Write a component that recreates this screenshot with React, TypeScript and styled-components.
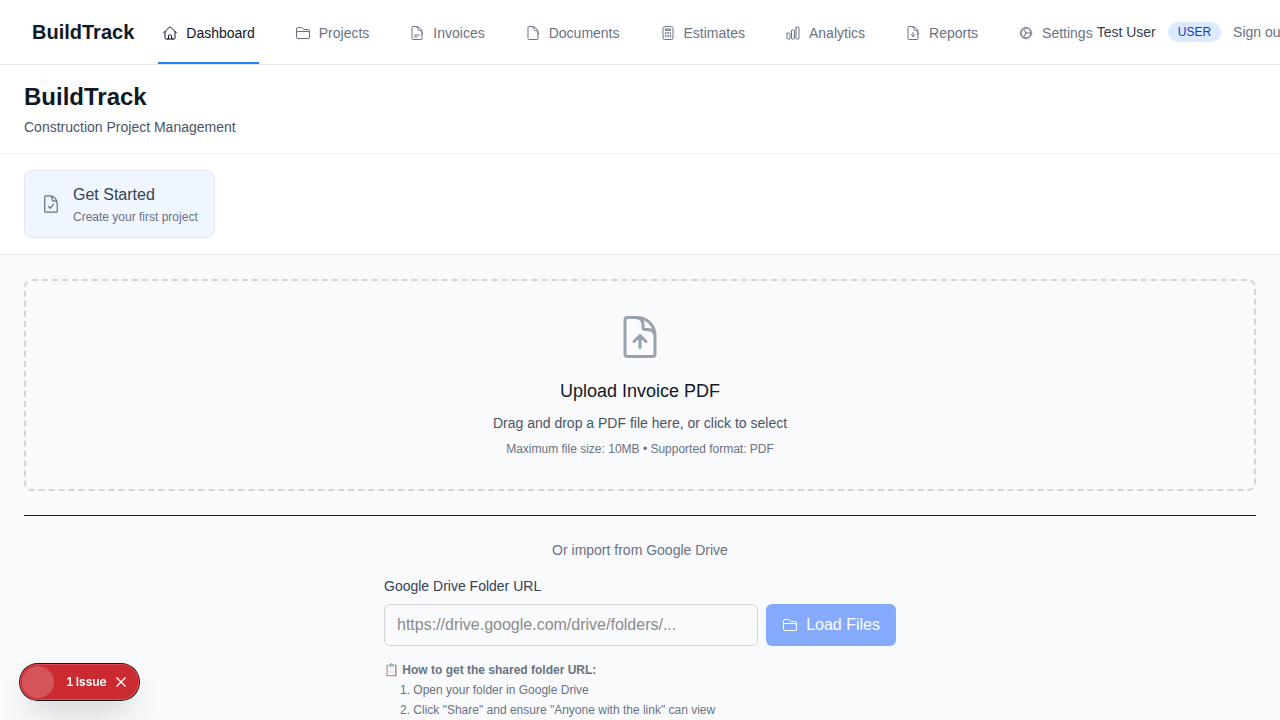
import React from "react";
import styled, { createGlobalStyle } from "styled-components";
import {
  HiOutlineHome,
  HiOutlineFolder,
  HiOutlineDocumentText,
  HiOutlineDocument,
  HiOutlineCalculator,
  HiOutlineChartBar,
  HiOutlineDocumentArrowDown,
  HiOutlineDocumentArrowUp,
  HiOutlineDocumentCheck,
  HiOutlineCog,
} from "react-icons/hi2";
import type { IconType } from "react-icons";

const GlobalStyle = createGlobalStyle`
  *, *::before, *::after { box-sizing: border-box; }
  body {
    margin: 0;
    background: #f9fafb;
    color: #171717;
    font-family: "Liberation Sans", Arial, Helvetica, sans-serif;
    font-size: 16px;
    line-height: 24px;
  }
  h1, h2, p, ol { margin: 0; padding: 0; }
  button, input { font: inherit; }
  svg { display: block; flex-shrink: 0; }
`;

const Page = styled.div`
  min-height: 100vh;
  overflow-x: hidden;
`;

const TopBar = styled.header`
  display: flex;
  justify-content: space-between;
  height: 65px;
  padding: 0 32px;
  background: #ffffff;
  border-bottom: 1px solid #e5e7eb;
  white-space: nowrap;
`;

const TopBarGroup = styled.div<{ $gap: number }>`
  display: flex;
  flex-shrink: 0;
  align-items: center;
  gap: ${(p) => p.$gap}px;
`;

const Brand = styled.a`
  color: #101828;
  font-size: 20px;
  font-weight: 700;
  line-height: 28px;
  text-decoration: none;
`;

const NavList = styled.nav`
  display: flex;
  align-self: stretch;
  gap: 32px;
`;

const NavLink = styled.a<{ $active: boolean }>`
  display: inline-flex;
  align-items: center;
  gap: 8px;
  padding: 4px 4px 0;
  border-bottom: 2px solid ${(p) => (p.$active ? "#2b7fff" : "transparent")};
  color: ${(p) => (p.$active ? "#101828" : "#6a7282")};
  font-size: 14px;
  line-height: 20px;
  text-decoration: none;
`;

const UserName = styled.span`
  color: #364153;
  font-size: 14px;
  line-height: 20px;
`;

const RoleBadge = styled.span`
  padding: 2px 10px;
  border-radius: 10px;
  background: #dbeafe;
  color: #193cb8;
  font-size: 12px;
  line-height: 16px;
`;

const SignOut = styled.button`
  padding: 0;
  border: 0;
  background: none;
  color: #6a7282;
  font-size: 14px;
  line-height: 20px;
  cursor: pointer;
`;

const PageHeader = styled.section`
  padding: 16px 24px;
  background: #ffffff;
  border-bottom: 1px solid #f3f4f6;
`;

const PageTitle = styled.h1`
  color: #101828;
  font-size: 24px;
  line-height: 32px;
`;

const PageSubtitle = styled.p`
  margin-top: 4px;
  color: #4a5565;
  font-size: 14px;
  line-height: 20px;
`;

const Steps = styled.section`
  display: flex;
  padding: 16px 24px;
  background: #ffffff;
  border-bottom: 1px solid #e5e7eb;
`;

const StepCard = styled.button`
  display: flex;
  align-items: center;
  gap: 12px;
  padding: 12px 16px;
  border: 1px solid #e5e7eb;
  border-radius: 8px;
  background: #eff6ff;
  color: #6a7282;
  text-align: left;
  cursor: pointer;
`;

const StepTitle = styled.span`
  display: block;
  color: #364153;
  line-height: 24px;
`;

const StepText = styled.span`
  display: block;
  margin-top: 2px;
  font-size: 12px;
  line-height: 16px;
`;

const Main = styled.main`
  padding: 24px;
`;

const DropZone = styled.section`
  display: flex;
  flex-direction: column;
  align-items: center;
  gap: 8px;
  padding: 32px;
  border: 2px dashed #d1d5dc;
  border-radius: 8px;
  color: #99a1af;
  text-align: center;
  cursor: pointer;
`;

const DropTitle = styled.h2`
  margin-top: 8px;
  color: #101828;
  font-size: 18px;
  font-weight: 400;
  line-height: 28px;
`;

const DropText = styled.p`
  color: #4a5565;
  font-size: 14px;
  line-height: 20px;
`;

const DropHint = styled.p`
  color: #6a7282;
  font-size: 12px;
  line-height: 16px;
`;

const ImportSection = styled.section`
  margin-top: 24px;
  padding-top: 24px;
  border-top: 1px solid #171717;
`;

const ImportCaption = styled.p`
  margin-bottom: 16px;
  color: #6a7282;
  font-size: 14px;
  line-height: 20px;
  text-align: center;
`;

const ImportForm = styled.form`
  max-width: 512px;
  margin: 0 auto;
`;

const FieldLabel = styled.label`
  display: block;
  margin-bottom: 8px;
  color: #364153;
  font-size: 14px;
  line-height: 20px;
`;

const FieldRow = styled.div`
  display: flex;
  gap: 8px;
`;

const UrlInput = styled.input`
  flex: 1;
  min-width: 0;
  padding: 8px 12px;
  border: 1px solid #d1d5dc;
  border-radius: 6px;
  background: transparent;
  color: #171717;
  line-height: 24px;
  &::placeholder {
    color: #8b8b8c;
    opacity: 1;
  }
`;

const LoadButton = styled.button`
  display: flex;
  align-items: center;
  gap: 8px;
  padding: 8px 16px;
  border: 0;
  border-radius: 6px;
  background: #155dfc;
  color: #ffffff;
  opacity: 0.5;
`;

const Help = styled.div`
  margin-top: 16px;
  color: #6a7282;
  font-size: 12px;
  line-height: 16px;
`;

const HelpList = styled.ol`
  display: flex;
  flex-direction: column;
  gap: 4px;
  margin-top: 4px;
  padding-left: 16px;
  list-style-position: inside;
`;

const IssueToast = styled.div`
  position: fixed;
  left: 20px;
  bottom: 20px;
  display: flex;
  align-items: center;
  height: 36px;
  padding: 2px;
  border-radius: 18px;
  background: #ca2a30;
  box-shadow: 0 0 0 1px #171717, inset 0 0 0 1px #e5484d,
    0 16px 32px -8px rgba(0, 0, 0, 0.24);
  color: #ffffff;
  font-family: Inter, "Liberation Sans", sans-serif;
  font-size: 12px;
  font-variant-numeric: tabular-nums;
`;

const ToastMark = styled.span`
  width: 32px;
  height: 32px;
  border-radius: 50%;
  background: rgba(255, 255, 255, 0.2);
`;

const ToastButton = styled.button`
  display: flex;
  align-items: center;
  gap: 2px;
  padding: 0;
  border: 0;
  background: none;
  color: inherit;
  font-weight: 600;
  font-variant-numeric: inherit;
  line-height: 16px;
  cursor: pointer;
`;

const ToastActions = styled.div`
  display: flex;
  align-items: center;
  gap: 8px;
  padding: 0 10px 0 12px;
`;

const links: { label: string; icon: IconType }[] = [
  { label: "Dashboard", icon: HiOutlineHome },
  { label: "Projects", icon: HiOutlineFolder },
  { label: "Invoices", icon: HiOutlineDocumentText },
  { label: "Documents", icon: HiOutlineDocument },
  { label: "Estimates", icon: HiOutlineCalculator },
  { label: "Analytics", icon: HiOutlineChartBar },
  { label: "Reports", icon: HiOutlineDocumentArrowDown },
  { label: "Settings", icon: HiOutlineCog },
];

export default function App() {
  return (
    <Page>
      <GlobalStyle />
      <TopBar>
        <TopBarGroup $gap={24}>
          <Brand href="#">BuildTrack</Brand>
          <NavList>
            {links.map(({ label, icon: Icon }, i) => (
              <NavLink key={label} href="#" $active={i === 0}>
                <Icon size={16} />
                {label}
              </NavLink>
            ))}
          </NavList>
        </TopBarGroup>
        <TopBarGroup $gap={12}>
          <UserName>Test User</UserName>
          <RoleBadge>USER</RoleBadge>
          <SignOut type="button">Sign out</SignOut>
        </TopBarGroup>
      </TopBar>

      <PageHeader>
        <PageTitle>BuildTrack</PageTitle>
        <PageSubtitle>Construction Project Management</PageSubtitle>
      </PageHeader>

      <Steps>
        <StepCard type="button">
          <HiOutlineDocumentCheck size={20} />
          <span>
            <StepTitle>Get Started</StepTitle>
            <StepText>Create your first project</StepText>
          </span>
        </StepCard>
      </Steps>

      <Main>
        <DropZone>
          <HiOutlineDocumentArrowUp size={48} />
          <DropTitle>Upload Invoice PDF</DropTitle>
          <DropText>Drag and drop a PDF file here, or click to select</DropText>
          <DropHint>Maximum file size: 10MB • Supported format: PDF</DropHint>
        </DropZone>

        <ImportSection>
          <ImportCaption>Or import from Google Drive</ImportCaption>
          <ImportForm>
            <FieldLabel htmlFor="folder-url">Google Drive Folder URL</FieldLabel>
            <FieldRow>
              <UrlInput
                id="folder-url"
                type="url"
                placeholder="https://drive.google.com/drive/folders/..."
              />
              <LoadButton type="submit" disabled>
                <HiOutlineFolder size={16} />
                Load Files
              </LoadButton>
            </FieldRow>
            <Help>
              <p>
                📋 <strong>How to get the shared folder URL:</strong>
              </p>
              <HelpList>
                <li>Open your folder in Google Drive</li>
                <li>Click "Share" and ensure "Anyone with the link" can view</li>
              </HelpList>
            </Help>
          </ImportForm>
        </ImportSection>
      </Main>

      <IssueToast>
        <ToastMark />
        <ToastActions>
          <ToastButton type="button">
            <span>1</span> <span>Issue</span>
          </ToastButton>
          <ToastButton type="button" aria-label="Dismiss">
            <svg width="12" height="12" viewBox="0 0 12 12" fill="none" stroke="currentColor" strokeWidth="1.3">
              <path d="M1.5 1.5l9 9M10.5 1.5l-9 9" />
            </svg>
          </ToastButton>
        </ToastActions>
      </IssueToast>
    </Page>
  );
}
